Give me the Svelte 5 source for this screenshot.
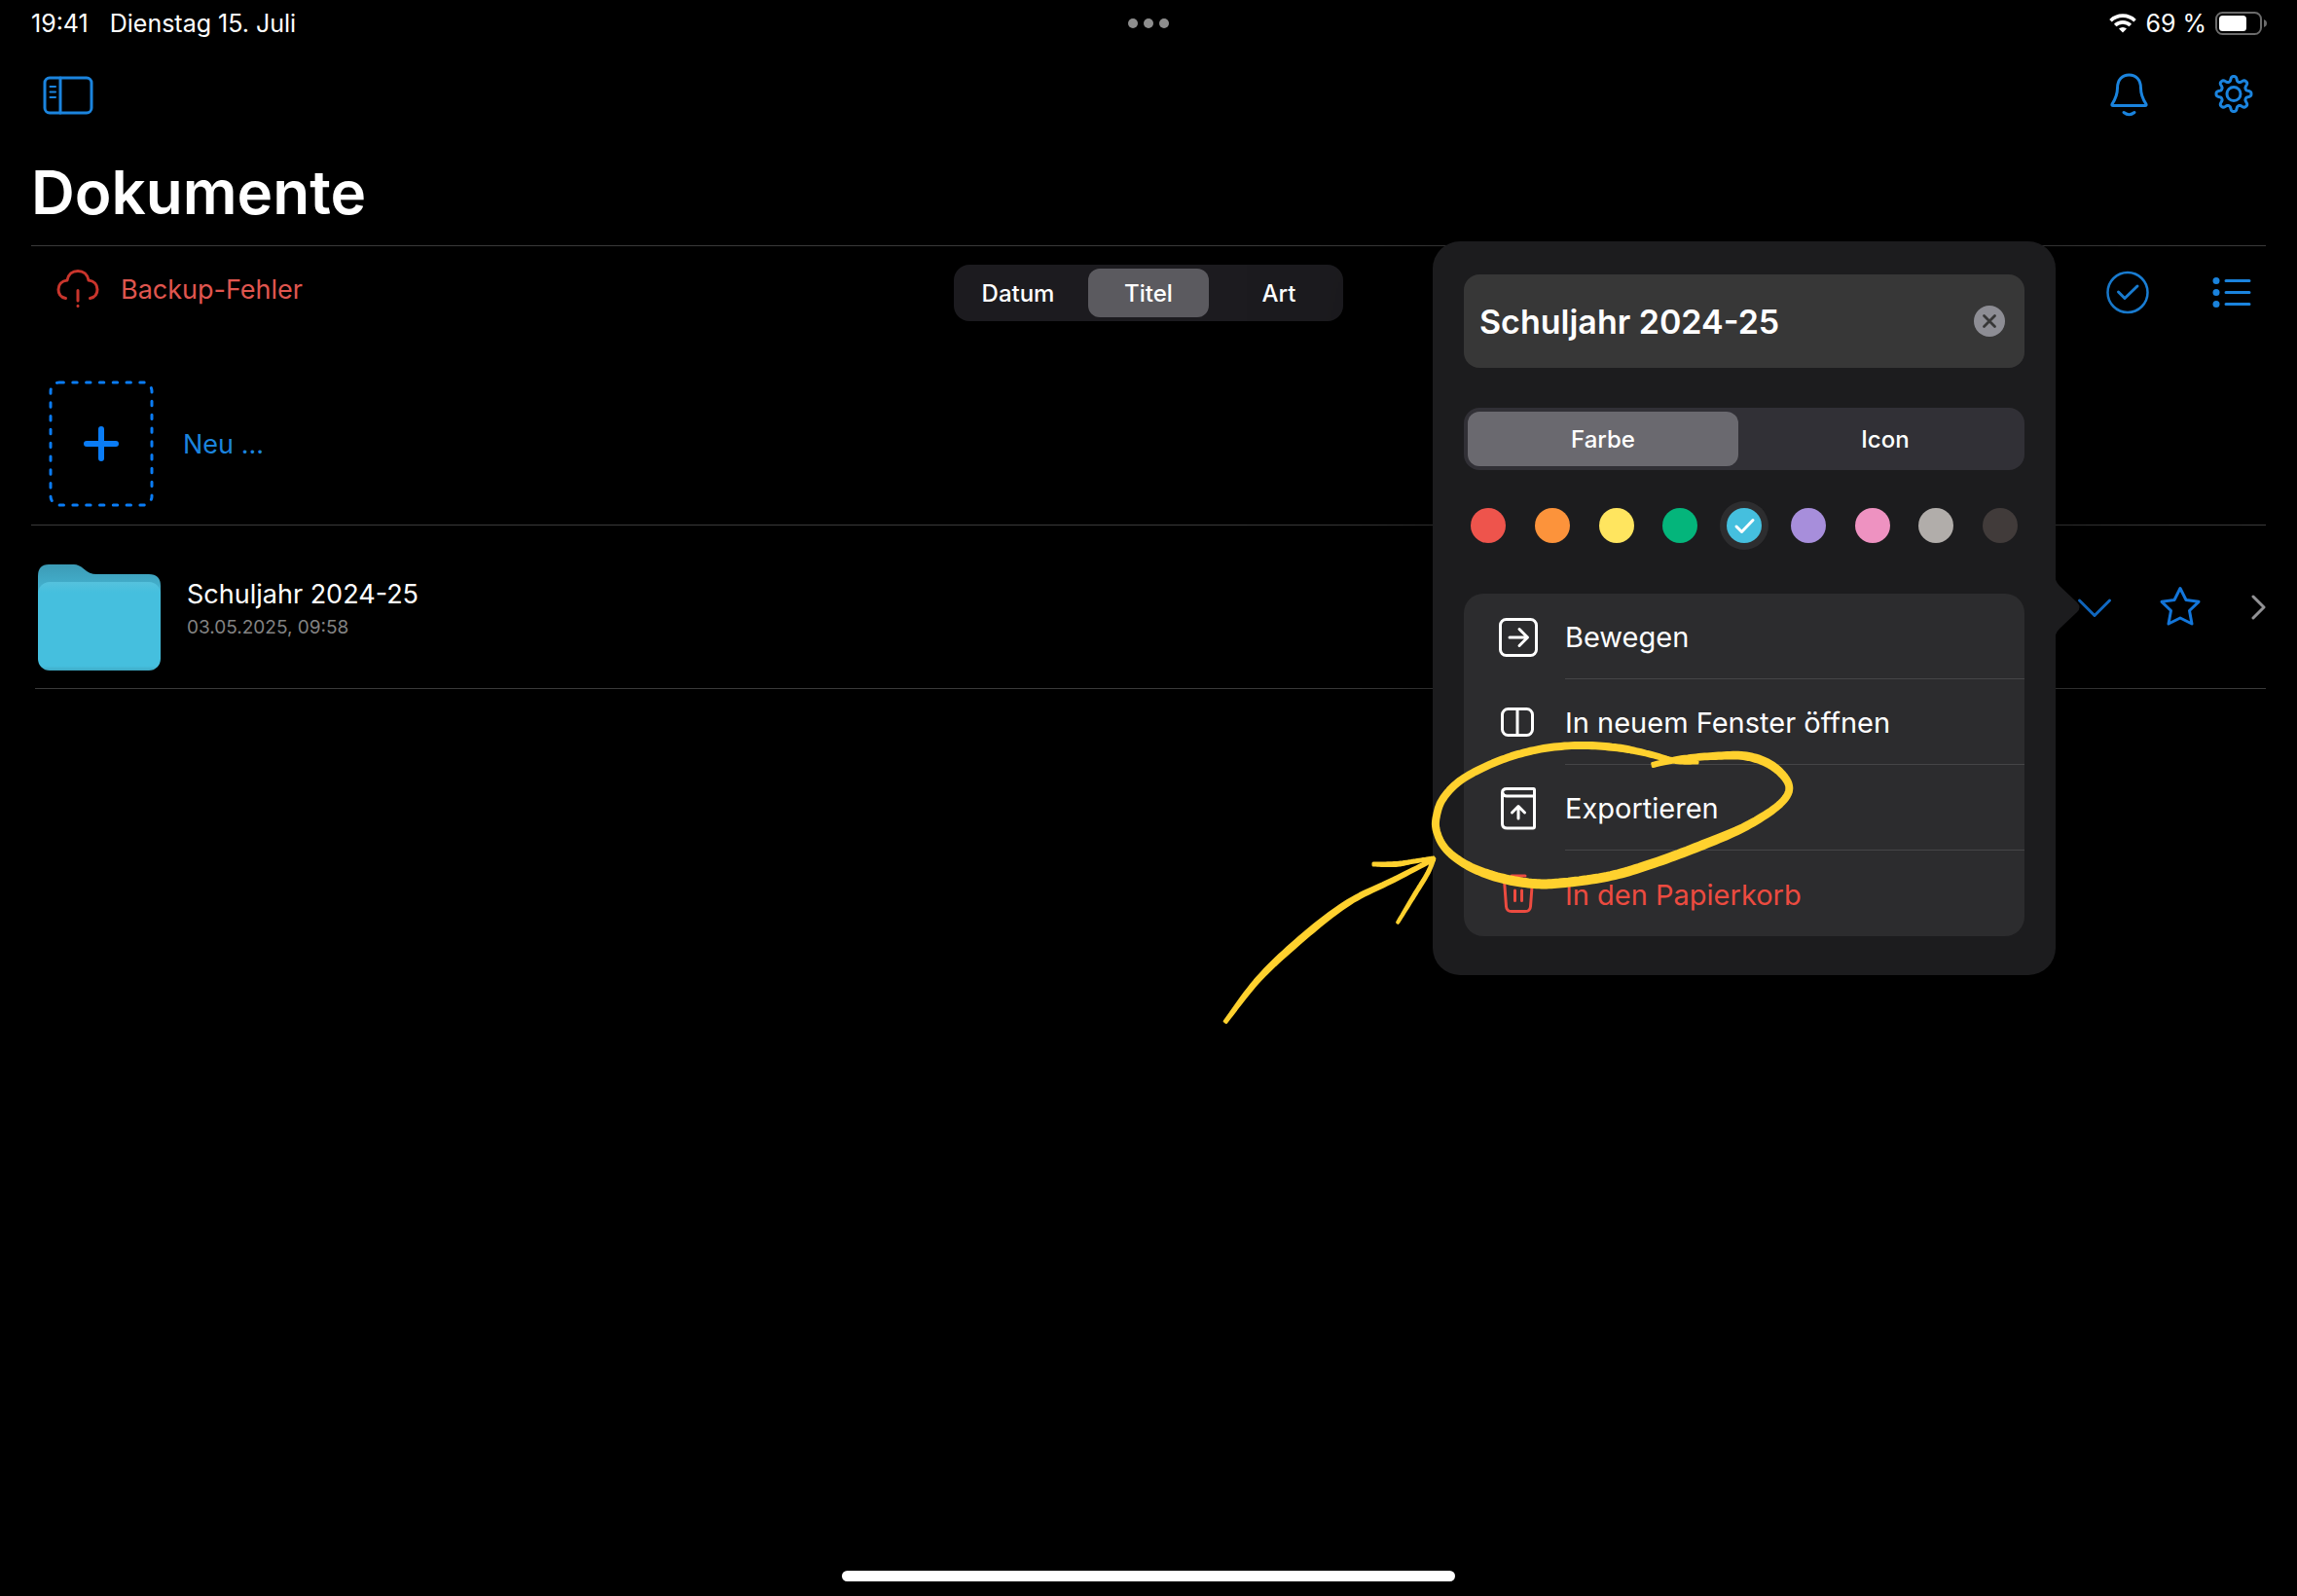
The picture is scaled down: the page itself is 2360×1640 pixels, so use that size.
<script lang="ts">
  type Point = [x: number, y: number, width: number];

  const sortModes = ["Datum", "Titel", "Art"];
  const styleTabs = ["Farbe", "Icon"];
  const colors = [
    { name: "Rot", value: "#ee544c" },
    { name: "Orange", value: "#fc933b" },
    { name: "Gelb", value: "#ffe55f" },
    { name: "Grün", value: "#04b57b" },
    { name: "Türkis", value: "#45bfde" },
    { name: "Violett", value: "#a78edb" },
    { name: "Rosa", value: "#ee92c1" },
    { name: "Grau", value: "#b1adaa" },
    { name: "Anthrazit", value: "#413b3a" },
  ];

  let sortMode = $state("Titel");
  let styleTab = $state("Farbe");
  let color = $state("#45bfde");
  let folderName = $state("Schuljahr 2024-25");

  // Gear outline: eight soft teeth around the hub.
  function gearPath(cx: number, cy: number): string {
    const pts: string[] = [];
    for (let i = 0; i < 160; i++) {
      const a = (i / 160) * Math.PI * 2;
      const wave = Math.cos(a * 8);
      const r = 15.6 + 2.4 * Math.tanh(wave * 1.6) / Math.tanh(1.6);
      pts.push(`${(cx + r * Math.sin(a)).toFixed(2)} ${(cy - r * Math.cos(a)).toFixed(2)}`);
    }
    return `M${pts.join("L")}Z`;
  }

  // Pen stroke of varying width, smoothed through the given points.
  function penPath(points: Point[]): string {
    const mid: Point[] = [];
    for (let i = 0; i < points.length - 1; i++) {
      const p0 = points[Math.max(i - 1, 0)];
      const p1 = points[i];
      const p2 = points[i + 1];
      const p3 = points[Math.min(i + 2, points.length - 1)];
      for (let s = 0; s < 12; s++) {
        const t = s / 12;
        mid.push(
          [0, 1, 2].map(
            (k) =>
              0.5 *
              (2 * p1[k] +
                (p2[k] - p0[k]) * t +
                (2 * p0[k] - 5 * p1[k] + 4 * p2[k] - p3[k]) * t * t +
                (3 * p1[k] - p0[k] - 3 * p2[k] + p3[k]) * t * t * t),
          ) as Point,
        );
      }
    }
    mid.push(points[points.length - 1]);
    const left: string[] = [];
    const right: string[] = [];
    mid.forEach(([x, y, w], i) => {
      const a = mid[Math.max(i - 1, 0)];
      const b = mid[Math.min(i + 1, mid.length - 1)];
      const len = Math.hypot(b[0] - a[0], b[1] - a[1]) || 1;
      const nx = ((b[1] - a[1]) / len) * (w / 2);
      const ny = ((a[0] - b[0]) / len) * (w / 2);
      left.push(`${(x + nx).toFixed(1)} ${(y + ny).toFixed(1)}`);
      right.unshift(`${(x - nx).toFixed(1)} ${(y - ny).toFixed(1)}`);
    });
    return `M${[...left, ...right].join("L")}Z`;
  }

  const loop: Point[] = [
    [458, 46, 3], [486, 40, 4], [520, 37, 5], [554, 37, 6], [581, 47, 6], [598, 67, 5],
    [589, 86, 5], [554, 109, 6], [510, 128, 7], [459, 147, 7], [415, 160, 7], [368, 167, 7],
    [336, 168, 7], [301, 162, 7], [269, 150, 6], [246, 133, 5], [236, 114, 5], [236, 98, 5],
    [243, 80, 5], [262, 61, 5], [297, 43, 5], [336, 31, 5], [378, 26, 5], [419, 28, 5],
    [451, 34, 4], [482, 42, 3], [504, 43, 2],
  ];
  const shaft: Point[] = [
    [19, 310, 2], [54, 265, 4], [100, 222, 5], [146, 187, 4], [192, 164, 3], [233, 143, 2],
  ];
  const barbTop: Point[] = [
    [171, 148, 2], [194, 148, 3], [213, 145, 2], [233, 142, 2],
  ];
  const barbBottom: Point[] = [
    [233, 142, 2], [227, 157, 2], [213, 180, 2], [196, 208, 1],
  ];
  const strokes = [loop, shaft, barbTop, barbBottom].map(penPath);
</script>

<div class="screen">
  <header class="status">
    <div class="status-left">
      <time>19:41</time>
      <span>Dienstag 15. Juli</span>
    </div>
    <button class="dots" aria-label="Multitasking"><i></i><i></i><i></i></button>
    <div class="status-right">
      <svg class="wifi" viewBox="0 0 28 20" aria-hidden="true">
        <path d="M1.5 7.2a18 18 0 0 1 25 0" fill="none" stroke="#fff" stroke-width="3.6" />
        <path d="M6.2 12a11.2 11.2 0 0 1 15.6 0" fill="none" stroke="#fff" stroke-width="3.6" />
        <path d="M14 19.6l-4-4.1a5.8 5.8 0 0 1 8 0z" fill="#fff" />
      </svg>
      <span>69 %</span>
      <svg class="battery" viewBox="0 0 54 24" aria-hidden="true">
        <rect x="1" y="1" width="46" height="22" rx="6.5" fill="none" stroke="#6b6b6b" stroke-width="2" />
        <rect x="4" y="4" width="28" height="16" rx="3.5" fill="#fff" />
        <path d="M50 8q3 1.2 3 4t-3 4z" fill="#6b6b6b" />
      </svg>
    </div>
  </header>

  <nav class="toolbar">
    <button class="icon-btn" aria-label="Seitenleiste">
      <svg class="sidebar" viewBox="0 0 52 40">
        <rect x="2" y="2" width="48" height="36" rx="5" stroke-width="3" />
        <path d="M18 2v36" stroke-width="3" />
        <path d="M7.5 11h5.5M7.5 16.5h5.5M7.5 22h5.5" stroke-width="2" />
      </svg>
    </button>
    <div class="toolbar-right">
      <button class="icon-btn" aria-label="Mitteilungen">
        <svg viewBox="0 0 48 48">
          <path d="M7 33c4-6 5.500-10 5.500-16.500C12.500 8 17.500 3 24.500 3s12 5 12 13.500C36.500 23 38 27 42 33q.6 1.500-1 1.500H8q-1.600 0-1-1.500z" />
          <path d="M19 41.500q5.500 4.400 11 0" />
        </svg>
      </button>
      <button class="icon-btn" aria-label="Einstellungen">
        <svg viewBox="0 0 48 48">
          <path d={gearPath(24, 22.5)} />
          <circle cx="24" cy="22.5" r="7" />
        </svg>
      </button>
    </div>
  </nav>

  <h1>Dokumente</h1>

  <main>
    <section class="filters">
      <button class="backup">
        <svg viewBox="0 0 48 44" aria-hidden="true">
          <path d="M11.500 31.500C6.500 30.500 4 27 4 22.500c0-5 3.500-8.800 9-9.400C14 7 18.500 3.500 24 3.500S34 7 35 13.100c5.500.6 9 4.400 9 9.400 0 4.500-2.500 8-7.500 9" />
          <path d="M24 23.500v10.500M24 39.300v.2" />
        </svg>
        <span>Backup-Fehler</span>
      </button>

      <div class="segments sort" role="group" aria-label="Sortierung">
        {#each sortModes as mode (mode)}
          <button aria-pressed={sortMode === mode} onclick={() => (sortMode = mode)}>{mode}</button>
        {/each}
      </div>

      <div class="filters-right">
        <button class="icon-btn" aria-label="Auswählen">
          <svg viewBox="0 0 48 48">
            <circle cx="24" cy="23.5" r="20.5" stroke-width="2.5" />
            <path d="M14.500 23l6.500 6.500L34 17" />
          </svg>
        </button>
        <button class="icon-btn" aria-label="Listenansicht">
          <svg viewBox="0 0 48 48">
            <path d="M17 11.500h24M17 23.500h24M17 35.500h24" />
            <g fill="currentColor" stroke="none">
              <circle cx="7" cy="11.5" r="3.5" />
              <circle cx="7" cy="23.5" r="3.5" />
              <circle cx="7" cy="35.5" r="3.5" />
            </g>
          </svg>
        </button>
      </div>
    </section>

    <button class="new-row">
      <svg viewBox="0 0 108 130" aria-hidden="true">
        <rect x="2" y="2" width="104" height="126" rx="9" stroke-width="3" stroke-dasharray="4.4 9.4" />
        <path d="M54 50v30M39 65h30" stroke-width="6" />
      </svg>
      <span>Neu ...</span>
    </button>

    <article class="folder-row">
      <svg class="folder" viewBox="0 0 126 110" aria-hidden="true">
        <defs>
          <linearGradient id="back" x1="0" y1="0" x2="0" y2="1">
            <stop offset="0" stop-color="#3c9bb6" />
            <stop offset="0.25" stop-color="#42adca" />
          </linearGradient>
          <linearGradient id="front" x1="0" y1="0" x2="0" y2="1">
            <stop offset="0" stop-color="#55c2dd" />
            <stop offset="0.12" stop-color="#45bfde" />
            <stop offset="0.95" stop-color="#45bfde" />
            <stop offset="1" stop-color="#3fa9c4" />
          </linearGradient>
        </defs>
        <path d="M0 12Q0 0 11 0h26q5 0 10 4.500Q53 10 60 10h54q12 0 12 12v60H0z" fill="url(#back)" />
        <rect y="18" width="126" height="91" rx="12" fill="url(#front)" />
      </svg>
      <div class="folder-text">
        <a href="#schuljahr">Schuljahr 2024-25</a>
        <time>03.05.2025, 09:58</time>
      </div>
      <div class="folder-actions">
        <button class="icon-btn" aria-label="Optionen">
          <svg viewBox="0 0 48 48"><path d="M8.500 17L24 32.500 39.500 17" /></svg>
        </button>
        <button class="icon-btn" aria-label="Favorit">
          <svg viewBox="0 0 48 48">
            <path d="M24 4.500l6 12 13 1.800-9.500 9.200 2.500 13.500L24 35l-12 6 2.500-13.500L5 18.300l13-1.800z" />
          </svg>
        </button>
        <svg class="next" viewBox="0 0 16 28" aria-hidden="true">
          <path d="M3 3l11 11L3 25" />
        </svg>
      </div>
    </article>
  </main>

  <div class="popover" role="dialog" aria-label="Ordner bearbeiten">
    <svg class="popover-arrow" viewBox="0 0 26 70" aria-hidden="true">
      <path d="M0 0q0 8 5 13l18 17q5 5 0 10L5 57q-5 5-5 13z" fill="#1c1c1e" />
    </svg>

    <div class="name-field">
      <input aria-label="Name" bind:value={folderName} />
      <button aria-label="Text löschen" onclick={() => (folderName = "")}>
        <svg viewBox="0 0 32 32">
          <circle cx="16" cy="16" r="16" fill="#8d8d94" />
          <path d="M10.500 10.500l11 11m0-11l-11 11" stroke="#373737" stroke-width="2.8" stroke-linecap="round" />
        </svg>
      </button>
    </div>

    <div class="segments style-tabs" role="group" aria-label="Darstellung">
      {#each styleTabs as tab (tab)}
        <button aria-pressed={styleTab === tab} onclick={() => (styleTab = tab)}>{tab}</button>
      {/each}
    </div>

    <div class="swatches" role="radiogroup" aria-label="Farbe">
      {#each colors as c (c.value)}
        <label class:selected={color === c.value}>
          <input type="radio" name="color" value={c.value} aria-label={c.name} bind:group={color} />
          <span style:background={c.value}>
            {#if color === c.value}
              <svg viewBox="0 0 36 36" aria-hidden="true"><path d="M10 19l5.500 5.500L27 12.500" /></svg>
            {/if}
          </span>
        </label>
      {/each}
    </div>

    <ul class="menu">
      <li>
        <button>
          <svg viewBox="0 0 48 48" aria-hidden="true">
            <rect x="5.5" y="6.5" width="37" height="37" rx="6" />
            <path d="M15 25h18M25 16.500l8.500 8.500-8.500 8.500" />
          </svg>
          <span>Bewegen</span>
        </button>
      </li>
      <li>
        <button>
          <svg viewBox="0 0 48 48" aria-hidden="true">
            <rect x="7.5" y="10.5" width="31" height="27" rx="6" />
            <path d="M23 10.500v27" />
          </svg>
          <span>In neuem Fenster öffnen</span>
        </button>
      </li>
      <li>
        <button>
          <svg viewBox="0 0 48 48" aria-hidden="true">
            <path d="M12 4.500H40q.5 0 .5 1v38q0 1.500-1.500 1.500H12.500q-5 0-5-4.500V8.500q0-4 4.500-4zM40.500 12H12q-3.500 0-4-3" />
            <path d="M24 35V23M17.500 29l6.500-6.500 6.500 6.500" />
          </svg>
          <span>Exportieren</span>
        </button>
      </li>
      <li class="danger">
        <button>
          <svg viewBox="0 0 48 48" aria-hidden="true">
            <path d="M6 10.500h36M17 6h14M9.500 10.500l2 27q.4 5 5.500 5h14q5.100 0 5.500-5l2-27M20.500 21v10.500M27.500 21v10.500" />
          </svg>
          <span>In den Papierkorb</span>
        </button>
      </li>
    </ul>

    <svg class="marker" viewBox="0 0 620 320" aria-hidden="true">
      {#each strokes as d}
        <path {d} />
      {/each}
    </svg>
  </div>

  <footer><i></i></footer>
</div>

<style>
  :global(body) {
    background: #000;
  }
  .screen {
    position: relative;
    display: flex;
    flex-direction: column;
    min-height: 100vh;
    box-sizing: border-box;
    padding: 0 32px;
    overflow: hidden;
    background: #000;
    color: #fff;
    font-family: Inter, "Liberation Sans", sans-serif;
    font-size: 27px;
  }
  button {
    margin: 0;
    padding: 0;
    border: 0;
    background: none;
    color: inherit;
    font: inherit;
    cursor: pointer;
  }
  svg {
    display: block;
    flex: none;
  }

  .status {
    display: grid;
    grid-template-columns: 1fr auto 1fr;
    align-items: center;
    height: 48px;
    margin-right: -2px;
    margin-left: -2px;
    font-size: 25px;
  }
  .status-left {
    display: flex;
    gap: 22px;
    padding-left: 2px;
  }
  .dots {
    display: flex;
    gap: 6px;
  }
  .dots i {
    width: 10px;
    height: 10px;
    border-radius: 50%;
    background: #8e8e8e;
  }
  .status-right {
    display: flex;
    justify-content: flex-end;
    align-items: center;
    gap: 9px;
  }
  .wifi {
    width: 28px;
    height: 20px;
  }
  .battery {
    width: 54px;
    height: 24px;
  }

  .icon-btn,
  .new-row {
    color: #1b84de;
  }
  .icon-btn svg,
  .backup svg,
  .new-row svg,
  .next,
  .menu svg {
    fill: none;
    stroke: currentColor;
    stroke-width: 3;
    stroke-linecap: round;
    stroke-linejoin: round;
  }
  .icon-btn svg {
    width: 48px;
    height: 48px;
  }
  .icon-btn .sidebar {
    width: 52px;
    height: 40px;
  }
  .toolbar {
    display: flex;
    justify-content: space-between;
    align-items: center;
    height: 100px;
    padding: 0 9px 0 12px;
  }
  .toolbar-right,
  .filters-right {
    display: flex;
    justify-content: flex-end;
    gap: 60px;
  }

  h1 {
    margin: 0;
    height: 104px;
    line-height: 100px;
    font-size: 62px;
    font-weight: 600;
    border-bottom: 1px solid #3a3a3a;
  }

  .filters {
    display: grid;
    grid-template-columns: 1fr auto 1fr;
    align-items: center;
    height: 64px;
    padding: 16px 0 40px;
  }
  .filters-right {
    padding-right: 10px;
  }
  .backup {
    display: flex;
    align-items: center;
    gap: 20px;
    padding: 0 0 8px 24px;
    color: #e0564f;
  }
  .backup svg {
    width: 48px;
    height: 44px;
    color: #c9352c;
  }
  .segments {
    display: flex;
    border-radius: 16px;
    padding: 4px;
    font-size: 24px;
    font-weight: 500;
  }
  .segments button {
    flex: 1;
    border-radius: 12px;
  }
  .sort {
    gap: 10px;
    background: #1c1b1f;
  }
  .sort button {
    width: 124px;
    height: 50px;
  }
  .sort button[aria-pressed="true"] {
    background: #5b5a5f;
  }

  .new-row {
    display: flex;
    align-items: center;
    gap: 30px;
    width: 100%;
    height: 167px;
    padding-left: 18px;
    border-bottom: 1px solid #3a3a3a;
  }
  .new-row svg {
    width: 108px;
    height: 130px;
    color: #0a7cf5;
  }

  .folder-row {
    display: flex;
    align-items: center;
    height: 167px;
    margin-left: 4px;
    padding-left: 3px;
    border-bottom: 1px solid #3a3a3a;
  }
  .folder {
    align-self: flex-end;
    width: 126px;
    height: 110px;
    margin-bottom: 17px;
  }
  .folder-text {
    display: flex;
    flex: 1;
    flex-direction: column;
    gap: 2px;
    padding: 4px 0 0 27px;
  }
  .folder-text a {
    color: inherit;
    line-height: 36px;
    text-decoration: none;
  }
  .folder-text time {
    color: #838383;
    font-size: 19px;
    line-height: 28px;
  }
  .folder-actions {
    display: flex;
    align-items: center;
    gap: 40px;
  }
  .folder-actions .icon-btn {
    color: #1479e0;
  }
  .next {
    width: 16px;
    height: 28px;
    margin-left: 8px;
    color: #929295;
  }

  .popover {
    position: absolute;
    top: 248px;
    right: 248px;
    box-sizing: border-box;
    width: 640px;
    padding: 34px 32px 40px;
    border-radius: 28px;
    background: #1c1c1e;
    box-shadow: 0 0 160px rgba(0, 0, 0, 0.5);
  }
  .popover-arrow {
    position: absolute;
    top: 341px;
    right: -25px;
    width: 26px;
    height: 70px;
  }
  .name-field {
    display: flex;
    align-items: center;
    height: 96px;
    padding: 0 20px 0 16px;
    border-radius: 16px;
    background: #373737;
  }
  .name-field input {
    flex: 1;
    min-width: 0;
    padding: 0;
    border: 0;
    outline: 0;
    background: none;
    color: inherit;
    font: 600 34px Inter, "Liberation Sans", sans-serif;
  }
  .name-field svg {
    width: 32px;
    height: 32px;
  }
  .style-tabs {
    margin-top: 41px;
    gap: 12px;
    background: #313036;
  }
  .style-tabs button {
    height: 56px;
  }
  .style-tabs button[aria-pressed="true"] {
    background: #6a696f;
  }
  .swatches {
    display: flex;
    justify-content: space-between;
    margin: 32px 0 45px;
  }
  .swatches label {
    display: grid;
    place-items: center;
    width: 50px;
    height: 50px;
    border-radius: 50%;
  }
  .swatches .selected {
    background: #2d2d2f;
  }
  .swatches input,
  .swatches span {
    grid-area: 1 / 1;
    width: 36px;
    height: 36px;
    margin: 0;
    border-radius: 50%;
  }
  .swatches input {
    appearance: none;
  }
  .swatches path {
    fill: none;
    stroke: #fff;
    stroke-width: 3;
    stroke-linecap: round;
    stroke-linejoin: round;
  }

  .menu {
    margin: 0;
    padding: 0;
    list-style: none;
    border-radius: 20px;
    background: #2c2c2e;
    font-size: 29px;
  }
  .menu button {
    display: flex;
    align-items: center;
    gap: 24px;
    width: 100%;
    height: 88px;
    padding-left: 32px;
    text-align: left;
  }
  .menu svg {
    width: 48px;
    height: 48px;
  }
  .menu span {
    display: flex;
    flex: 1;
    align-items: center;
    box-sizing: border-box;
    height: 88px;
    padding-top: 2px;
    border-bottom: 1px solid #454547;
  }
  .menu .danger {
    color: #ec4b40;
  }
  .menu .danger span {
    border-bottom: 0;
  }

  /* Hand-drawn circle and arrow lie over the menu and point at the export entry. */
  .marker {
    position: absolute;
    top: 492px;
    left: -232px;
    width: 620px;
    height: 320px;
    pointer-events: none;
  }
  .marker path {
    fill: #ffd12e;
    stroke: #ffd12e;
    stroke-width: 3;
    stroke-linejoin: round;
  }

  footer {
    display: flex;
    justify-content: center;
    margin-top: auto;
    padding-bottom: 15px;
  }
  footer i {
    width: 630px;
    height: 11px;
    border-radius: 6px;
    background: #fff;
  }
</style>
